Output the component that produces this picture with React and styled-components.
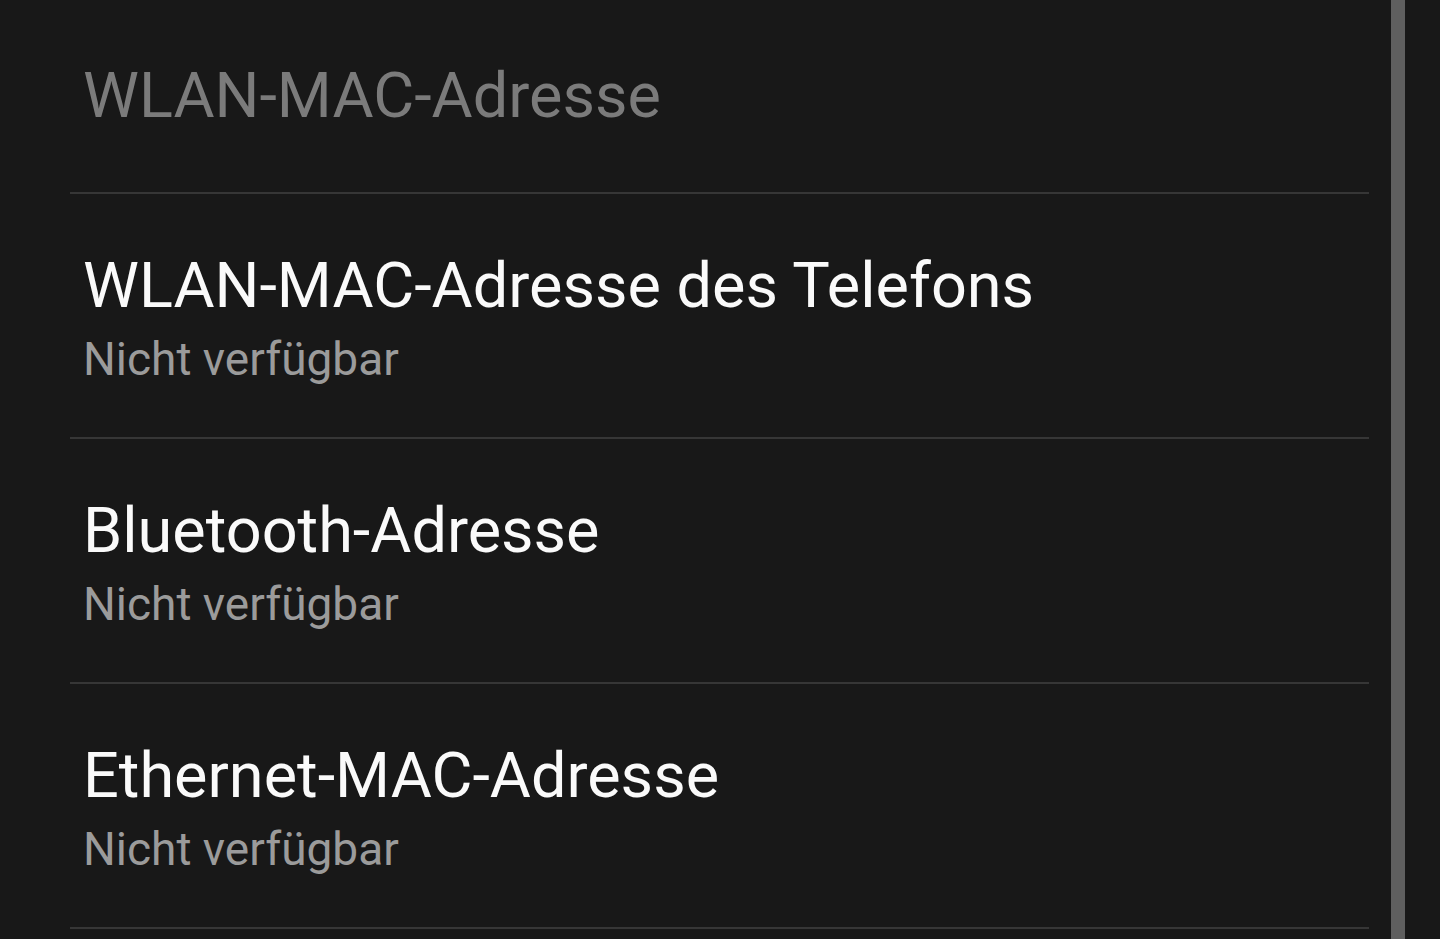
import React from "react";
import styled, { createGlobalStyle } from "styled-components";

const GlobalStyle = createGlobalStyle`
  html, body {
    margin: 0;
    padding: 0;
    background: #181818;
  }
  body {
    font-family: Roboto, "Noto Sans", "Liberation Sans", sans-serif;
  }
`;

const Screen = styled.div`
  display: flex;
  height: 100vh;
  overflow: hidden;
  background: #181818;
`;

const List = styled.div`
  display: flex;
  flex-direction: column;
  width: 1299px;
  margin-left: 70px;
`;

const Header = styled.div`
  padding: 64px 0 65px 13px;
  font-size: 63px;
  line-height: 63px;
  color: #7b7b7b;
  white-space: nowrap;
`;

const Divider = styled.div`
  height: 2px;
  background: #363636;
`;

const Item = styled.div`
  display: flex;
  flex-direction: column;
  gap: 19px;
  padding: 60px 0 55px 13px;
`;

const Title = styled.div`
  font-size: 63px;
  line-height: 63px;
  color: #fafafa;
  white-space: nowrap;
`;

const Summary = styled.div`
  font-size: 46px;
  line-height: 46px;
  color: #9b9b9b;
  white-space: nowrap;
`;

const Scrollbar = styled.div`
  width: 14px;
  margin-left: 22px;
  flex-shrink: 0;
  background: #5f5f5f;
`;

const items = [
  { title: "WLAN-MAC-Adresse des Telefons", summary: "Nicht verfügbar" },
  { title: "Bluetooth-Adresse", summary: "Nicht verfügbar" },
  { title: "Ethernet-MAC-Adresse", summary: "Nicht verfügbar" },
];

const App = () => {
  return (
    <>
      <GlobalStyle />
      <Screen>
        <List>
          <Header>WLAN-MAC-Adresse</Header>
          {items.map((item) => (
            <React.Fragment key={item.title}>
              <Divider />
              <Item>
                <Title>{item.title}</Title>
                <Summary>{item.summary}</Summary>
              </Item>
            </React.Fragment>
          ))}
          <Divider />
        </List>
        <Scrollbar />
      </Screen>
    </>
  );
};

export default App;
